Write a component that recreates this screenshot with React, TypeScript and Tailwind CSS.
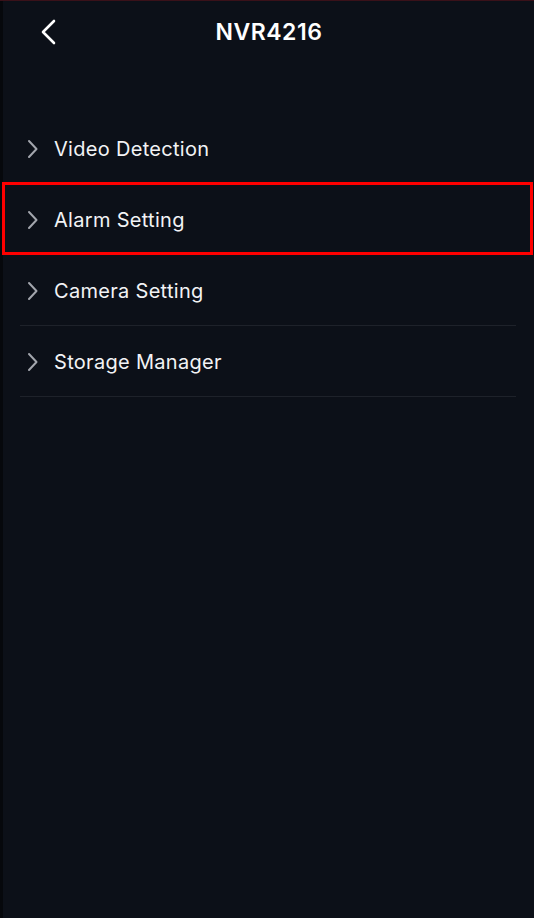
import React from "react";

const items = ["Video Detection", "Alarm Setting", "Camera Setting", "Storage Manager"];

function Chevron() {
  return (
    <svg width="14" height="20" viewBox="0 0 14 20" fill="none">
      <path d="M3 2 L10.5 10 L3 18" stroke="#a3a6ad" strokeWidth="2" strokeLinecap="round" strokeLinejoin="round" />
    </svg>
  );
}

export default function App() {
  return (
    <div
      className="relative w-[534px] h-[918px] bg-[#0c1018] flex flex-col overflow-hidden"
      style={{ fontFamily: "Inter, 'Noto Sans', sans-serif" }}
    >
      <div className="h-[1px] bg-[#3a1119]" />
      <div className="flex flex-1">
        <div className="w-[3px] bg-[#06080c]" />
        <div className="flex-1 flex flex-col">
          <div className="relative h-[62px] flex items-center justify-center">
            <div className="absolute left-[35px] top-[17px]">
              <svg width="22" height="28" viewBox="0 0 22 28" fill="none">
                <path d="M16 3 L5 14 L16 25" stroke="#ffffff" strokeWidth="2.6" strokeLinecap="round" strokeLinejoin="round" />
              </svg>
            </div>
            <span className="text-white text-[23px] font-semibold tracking-[0.5px] ml-[1px]">NVR4216</span>
          </div>
          <div className="mt-[50px] flex flex-col">
            {items.map((t) => (
              <div key={t} className="h-[71px] flex flex-col">
                <div className="flex-1 flex items-center pl-[23px] pt-[1px]">
                  <Chevron />
                  <span className="ml-[14px] text-[20px] text-[#f2f3f5] tracking-[0.3px]">{t}</span>
                </div>
                <div className="ml-[17px] mr-[18px] h-[1px] bg-[#1e222a]" />
              </div>
            ))}
          </div>
        </div>
      </div>
      <div className="absolute left-[2px] top-[182px] w-[531px] h-[73px] border-[3px] border-[#ff0000] pointer-events-none" />
    </div>
  );
}
